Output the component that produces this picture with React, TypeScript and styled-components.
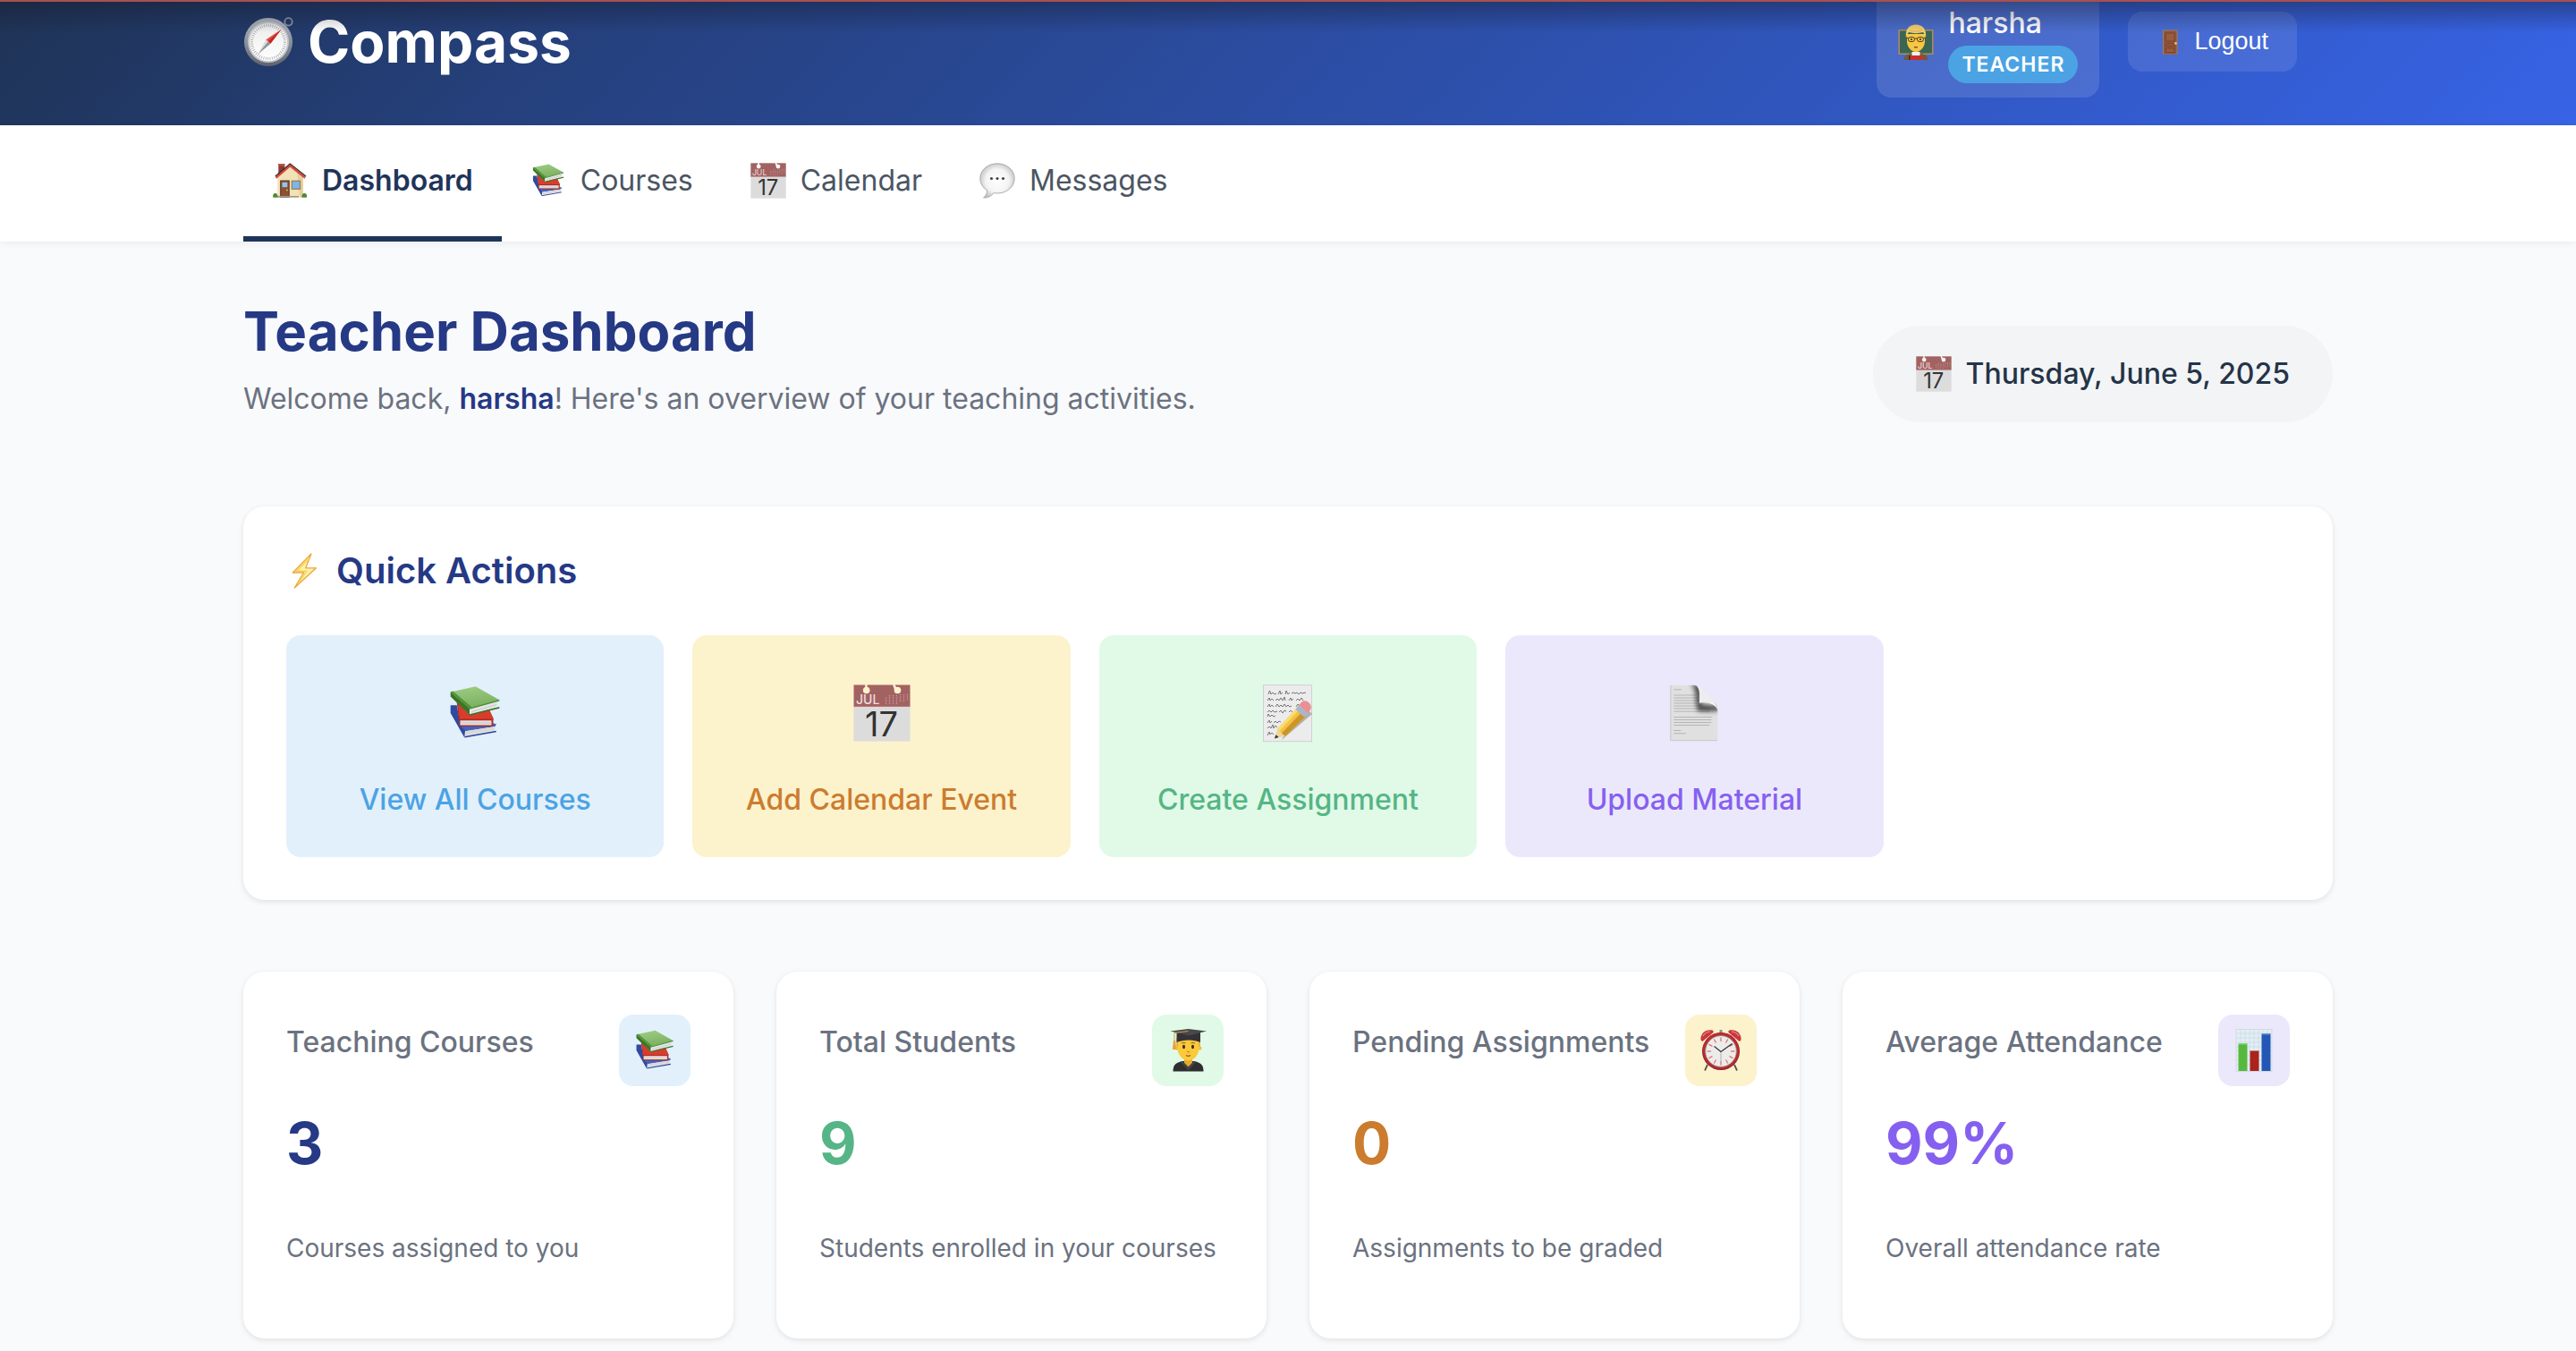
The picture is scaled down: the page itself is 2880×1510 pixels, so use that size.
import React from "react";
import styled, { createGlobalStyle } from "styled-components";

const GlobalStyle = createGlobalStyle`
  *, *::before, *::after { box-sizing: border-box; }
  body {
    margin: 0;
    background: #f9fafc;
    color: #243447;
    font-family: Inter, "Noto Sans", sans-serif;
    font-size: 32px;
  }
  h1, h2, h3, p { margin: 0; }
`;

/* ---------- palette ---------- */

type Tone = "blue" | "amber" | "green" | "violet";

const tones: Record<Tone, { surface: string; ink: string }> = {
  blue: { surface: "#e2f0fc", ink: "#4ba3e3" },
  amber: { surface: "#fcf2cc", ink: "#cb7c2f" },
  green: { surface: "#e1fae7", ink: "#55b586" },
  violet: { surface: "#ece8fc", ink: "#8560f0" },
};

/* ---------- icons ---------- */

const Glyph = styled.svg<{ $size: number }>`
  width: ${(p) => p.$size}px;
  height: ${(p) => p.$size}px;
  flex: none;
  display: block;
  overflow: visible;
`;

type IconProps = { size: number };

const CompassIcon = ({ size }: IconProps) => (
  <Glyph $size={size} viewBox="0 0 56 56" aria-hidden="true">
    <defs>
      <linearGradient id="compassRim" x1="0" y1="0" x2="0" y2="1">
        <stop offset="0" stopColor="#b4bac2" />
        <stop offset="0.5" stopColor="#8b929c" />
        <stop offset="1" stopColor="#5d636c" />
      </linearGradient>
      <linearGradient id="compassFace" x1="0" y1="0" x2="0" y2="1">
        <stop offset="0" stopColor="#ececec" />
        <stop offset="1" stopColor="#ffffff" />
      </linearGradient>
    </defs>
    <circle cx="50.5" cy="5.4" r="4.2" fill="none" stroke="#8f97a3" strokeWidth="1.8" />
    <circle cx="28" cy="28" r="27" fill="url(#compassRim)" />
    <circle cx="28" cy="28" r="23" fill="#c4c8cd" />
    <circle cx="28" cy="28" r="21" fill="url(#compassFace)" />
    <circle cx="28" cy="28" r="18.5" fill="none" stroke="#a4a4a4" strokeWidth="3" strokeDasharray="0.8 1.6" />
    <path d="M42.6 13.8 30.4 29.8 25.2 25.4Z" fill="#e8463c" />
    <path d="M42.6 13.8 30.4 29.8 27.8 27.6Z" fill="#c3261f" />
    <path d="M16.4 41.6 25.2 25.4 30.4 29.8Z" fill="#d9dadc" />
    <path d="M16.4 41.6 27.8 27.6 30.4 29.8Z" fill="#8d9096" />
  </Glyph>
);

const TeacherIcon = ({ size }: IconProps) => (
  <Glyph $size={size} viewBox="0 0 40 40" aria-hidden="true">
    <rect x="0.5" y="6" width="39" height="28" fill="#b08a62" />
    <rect x="2" y="7.5" width="36" height="25" fill="#3a6652" />
    <path d="M6 40c.6-4 3-6 8-7h12c5 1 7.4 3 8 7z" fill="#6f5c3f" />
    <path d="M15.5 31h9v5h-9z" fill="#f1f1f1" />
    <rect x="12" y="35" width="16" height="5" fill="#c6322b" />
    <path d="M12 35h1.5v5H12z" fill="#3a2a24" />
    <path d="M10 11h20v8c0 6-4.500 12-10 12S10 25 10 19z" fill="#f6c743" />
    <path d="M9 16C7.500 5 13 .5 20 .5S32.500 5 31 16c-.8-3.500-1.500-5.500-3-7-5 1.500-11 1.500-16 0-1.500 1.500-2.300 3.500-3 7z" fill="#f1cd6c" />
    <path d="M13 7c5 2 10 1.500 14-.5" fill="none" stroke="#d9a94a" strokeWidth="0.800" />
    <rect x="11.500" y="14.500" width="7" height="5" rx="2.400" fill="none" stroke="#4a3826" strokeWidth="1" />
    <rect x="21.500" y="14.500" width="7" height="5" rx="2.400" fill="none" stroke="#4a3826" strokeWidth="1" />
    <path d="M18.500 16h3M9.500 15.500h2M28.500 15.500h2" stroke="#4a3826" strokeWidth="1" />
    <circle cx="15" cy="17" r="1.100" fill="#3a2c1e" />
    <circle cx="25" cy="17" r="1.100" fill="#3a2c1e" />
    <path d="M18 25.500c1.300.6 2.700.6 4 0" fill="none" stroke="#7b3a1c" strokeWidth="1.300" />
  </Glyph>
);

const DoorIcon = ({ size }: IconProps) => (
  <Glyph $size={size} viewBox="0 0 30 30" aria-hidden="true">
    <rect x="7" y="1.5" width="16.5" height="27.5" fill="#a97a5c" />
    <rect x="8" y="2.5" width="14.5" height="26" fill="#90543a" />
    <path d="M10.500 5h9.500v9h-9.500zM10.500 17h9.500v2.500h-9.500zM10.500 22h9.500v4.500h-9.500z" fill="#985c40" stroke="#74402a" strokeWidth="0.800" />
    <circle cx="21.500" cy="16.500" r="1.400" fill="#e8c455" />
  </Glyph>
);

const HouseIcon = ({ size }: IconProps) => (
  <Glyph $size={size} viewBox="0 0 40 40" aria-hidden="true">
    <rect x="7.300" y="1" width="7" height="13" fill="#8f3a33" />
    <rect x="7.300" y="1" width="7" height="2.500" fill="#b4554c" />
    <path d="M20.300 4 6.300 16v22.500h28.500V16z" fill="#f3e2b8" />
    <path d="M28 10.500 34.800 16v22.500H31z" fill="#e5cf9d" />
    <path d="M20.300 1.500 3.800 15.800l1.300 2 15.200-13L36.500 17.800l1.300-2z" fill="#d8483c" />
    <path d="M3.800 15 20.300 1 38 15" fill="none" stroke="#3a2b2b" strokeWidth="1.300" />
    <rect x="9.700" y="20" width="9.500" height="18.500" fill="#8a5134" stroke="#5b3220" strokeWidth="1" />
    <rect x="11.500" y="21.800" width="5.800" height="5.400" fill="#8fc6ee" />
    <circle cx="17" cy="30.500" r="0.900" fill="#e9bd45" />
    <rect x="22.300" y="20.300" width="9.200" height="9" fill="#7fb6e8" stroke="#9a7f55" strokeWidth="1.300" />
    <path d="M6 37h24v1.700H6z" fill="#a39a88" />
    <path d="M1.200 38.700c-.5-3 1-5 2.600-4.700 2-.3 3 2 2.800 4.700zM33.500 38.700c-.4-3 1.200-5 3-4.700 2 0 2.900 2 2.600 4.700z" fill="#4f8a33" />
  </Glyph>
);

const BooksIcon = ({ size }: IconProps) => (
  <Glyph $size={size} viewBox="0 0 64 64" aria-hidden="true">
    <defs>
      <linearGradient id="bookGreen" x1="0" y1="0" x2="0.300" y2="1">
        <stop offset="0" stopColor="#a0cd84" />
        <stop offset="1" stopColor="#7bb160" />
      </linearGradient>
    </defs>
    <path d="M4.700 23.300h7L16 46l39.700-2-1.200 3-33.500 5-.7 7.500L4.700 32z" fill="#2f4a9f" />
    <path d="M16 46.500 52 43l3.700 1.500-1.400 2-33 5.500z" fill="#4262c2" />
    <path d="M21.300 52.300 54 47v4.200L21.300 57.300z" fill="#d9d9d9" />
    <path d="M20.500 58.700 55.700 52.500" fill="none" stroke="#2b3f94" strokeWidth="1.500" />
    <path d="M11.700 20 26 34l22-6 4.700 10.300L52 47H15z" fill="#b12a20" />
    <path d="M13 22 26 34l22-5 4.700 9.500H15z" fill="#d93c2d" />
    <path d="M15.500 40.300h35V45.500h-35z" fill="#e2e2e2" />
    <path d="M15.500 43H50" stroke="#bdbdbd" strokeWidth="0.800" />
    <path d="M4.700 8.300 26 26.300v8L4.700 13.500z" fill="#3c7526" />
    <path d="M4.700 8.300 32.700 2.300 59.300 17.300 26 26.800z" fill="url(#bookGreen)" />
    <path d="M4.700 8.300 26 26.300l2.500-.7L7.500 7.700z" fill="#4f8f35" />
    <path d="M28 28 57 19.500l-1.500 5.800L27.500 32.500z" fill="#e4e4e4" />
    <path d="M28 30.500 56.500 22.500" stroke="#c0c0c0" strokeWidth="0.800" />
    <path d="M26 34 59.300 25.800" fill="none" stroke="#3c7526" strokeWidth="1.700" />
    <path d="M26 27 59.300 17.800" fill="none" stroke="#4f8f35" strokeWidth="1.500" />
  </Glyph>
);

const CalendarIcon = ({ size }: IconProps) => {
  const id = React.useId();
  return (
    <Glyph $size={size} viewBox="0 0 64 64" aria-hidden="true">
      <mask id={id}>
        <rect width="64" height="64" fill="#fff" />
        <circle cx="14.700" cy="6.500" r="3.800" fill="#000" />
        <path d="M13.200 0h2.400v5h-2.400zM44 0h2.500l3 6h-3.500z" fill="#000" />
        <circle cx="49.500" cy="6.500" r="3.800" fill="#000" />
      </mask>
      <g mask={`url(#${id})`}>
        <rect x="0.500" y="0.500" width="63" height="25" fill="#a36262" />
        <rect x="0.500" y="25.500" width="63" height="38" fill="#dcdcdc" />
        <path d="M.5 25.300h63" stroke="#eee0e0" strokeWidth="0.800" />
      </g>
      <text x="3" y="22" fontFamily="Inter, sans-serif" fontSize="14" fill="#eddcdc">JUL</text>
      <path
        d="M36.500 14.500v7.500M40.500 12v10M44.500 12v10M48.500 12v10M52.500 11v9M56.500 11v9M60.500 11v7"
        stroke="#c89a9a"
        strokeWidth="1.300"
        strokeDasharray="1.200 1"
      />
      <text x="31.500" y="57.500" textAnchor="middle" fontFamily="Inter, sans-serif" fontSize="38" fontWeight="400" fill="#333">17</text>
    </Glyph>
  );
};

const SpeechIcon = ({ size }: IconProps) => (
  <Glyph $size={size} viewBox="0 0 40 40" aria-hidden="true">
    <defs>
      <radialGradient id="bubble" cx="0.500" cy="0.500" r="0.560">
        <stop offset="0" stopColor="#ffffff" />
        <stop offset="0.600" stopColor="#f4f4f4" />
        <stop offset="1" stopColor="#bdbdbd" />
      </radialGradient>
    </defs>
    <path
      d="M20 .8C9.400.8.800 8 .8 17.500c0 5.500 3 10.300 7.700 13.300.3 3-1.200 6-4 8.200 5 .3 9-2 11.500-5.300 1.300.2 2.600.3 4 .3 10.600 0 19.200-7 19.200-16.500S30.600.8 20 .8z"
      fill="url(#bubble)"
      stroke="#a6a6a6"
      strokeWidth="0.900"
    />
    <circle cx="13.500" cy="17.500" r="1.600" fill="#444" />
    <circle cx="20" cy="17.500" r="1.600" fill="#444" />
    <circle cx="26.500" cy="17.500" r="1.600" fill="#444" />
  </Glyph>
);

const BoltIcon = ({ size }: IconProps) => (
  <Glyph $size={size} viewBox="0 0 40 40" aria-hidden="true">
    <path d="M28 1 7.300 22h12.200L9.300 39 33.500 16.800H21.800z" fill="#fdf0a8" stroke="#eda63a" strokeWidth="1.300" strokeLinejoin="round" />
    <path d="M25.500 6.500 11.500 20.400h11L14 33.500" fill="none" stroke="#f7cf4d" strokeWidth="1.300" />
  </Glyph>
);

const MemoIcon = ({ size }: IconProps) => (
  <Glyph $size={size} viewBox="0 0 64 64" aria-hidden="true">
    <rect x="4.500" y="0.700" width="54" height="63" fill="#ececec" stroke="#cdcdcd" strokeWidth="0.900" />
    <g fill="none" stroke="#666" strokeWidth="0.900">
      <path d="M10 11l1.500-4 1.500 4 2-2 2 2 2-1M21 11l2-4 1 4 2-2M29 11l1-4 2 4 2-2M36 10l2-1 2 1 2-1 2 2 2-2 2 1 4-1" />
      <path d="M9 18l2-3 1 3 2-2 2 2M18 18l2-2 2 2 2-3 2 3 2-4 1 4M33 18l2-3 1 3 2-2M41 18l2-2 2 2 2-3 2 3" />
      <path d="M9 25l2-3 1 3 2-2 2 2M18 25l2-3 2 3 2-2 2 2 2-3 2 3 2-2 2 2 2-1M41 25l2-3 2 2" />
      <path d="M9 31l2-2 2 2 2-2 2 2 3-1M22 31l2-2 2 3 2-3 2 1M33 31l2-2 2 2" />
      <path d="M9 36l1-3 2 3 2-2 2 2 2-1" />
      <path d="M9 43l2-3 1 3 2-2M16 43l2-2 2 2 2-2 2 1" />
      <path d="M9 49l2-2 2 2 2-4 1 4 2-3 2 2" />
      <path d="M9 57l2-4 1 3 2-2 2 2" />
    </g>
    <path d="M25 62 59 33l-3-3-28 26z" fill="#8a8a8a" opacity="0.600" />
    <path d="M17 60.500 20.500 49 29 57.500z" fill="#efd59a" />
    <path d="M17 60.500 18.300 56.300l3.400 2.800z" fill="#333" />
    <path d="M20 50 42 26l10 9.500L29 57.800z" fill="#f3c242" />
    <path d="M25 54.500 47.500 31l4.500 4.500L29 57.800z" fill="#cc9527" />
    <path d="M20 50 42 26l2.500 2.300L22.500 52z" fill="#fbdc6f" />
    <path d="M40.500 28l3.500-5 10.500 9.500-4.500 4z" fill="#a8b8cc" />
    <path d="M44 23 47.500 19.500c2-2 5.500-1.500 8 1s3.200 5.800 1.500 7.800L54 32.500z" fill="#ea9095" />
  </Glyph>
);

const PageIcon = ({ size }: IconProps) => (
  <Glyph $size={size} viewBox="0 0 64 64" aria-hidden="true">
    <defs>
      <clipPath id="pageShape">
        <path d="M5.300.7H30c5 0 8 2 9 4.500L56 21c1.500 2 2.300 5 2.300 9v33.300h-53z" />
      </clipPath>
      <filter id="pageShade" x="-50%" y="-50%" width="200%" height="200%">
        <feGaussianBlur stdDeviation="2.500" />
      </filter>
      <linearGradient id="curl" x1="0" y1="1" x2="1" y2="0">
        <stop offset="0" stopColor="#cfcfcf" />
        <stop offset="0.500" stopColor="#f4f4f4" />
        <stop offset="1" stopColor="#ffffff" />
      </linearGradient>
    </defs>
    <g clipPath="url(#pageShape)">
      <rect x="5" y="0.500" width="54" height="63" fill="#e0e0e0" />
      <path d="M5.700 1v62M5.300 62.800h53" stroke="#c6c6c6" strokeWidth="1.200" />
      <path
        d="M9.300 5.800h8.500M9.300 12h25M9.300 15h27M9.300 18h27M9.300 21h26M9.300 24h30M9.300 27h40M9.300 30.200h40M9.300 36.500h43M9.300 39.500h42M9.300 42.500h42M9.300 45.500h40M9.300 51.500h8M9.300 54.800h13.500"
        stroke="#b4b4b4"
        strokeWidth="1"
      />
      <path d="M28-2 40 2v20l22 2v4c-6 3-16 2-26 2l-2-10C34 8 32 3 28-2z" fill="#333" opacity="0.850" filter="url(#pageShade)" />
    </g>
    <path d="M34.500 1c4 3.500 4.300 12 3.300 19.700C47 19.500 54 21 58.300 28c-.4-3-1.200-4.500-2.500-6L39.500 4.500C38 2.500 36.500 1.500 34.500 1z" fill="url(#curl)" />
    <path d="M38.300 4 57 21.800c-5-2.300-12-2.300-18.700-1.300z" fill="#ededed" />
  </Glyph>
);

const StudentIcon = ({ size }: IconProps) => (
  <Glyph $size={size} viewBox="0 0 48 48" aria-hidden="true">
    <path d="M7.500 47.500C7.500 41 9.500 38 18 36h13c8.500 2 10.500 5 10.500 11.500z" fill="#2e2e31" />
    <path d="M20 33h9v5l-4.500 4.500L20 38z" fill="#e5a92c" />
    <path d="M18 36l6.500 7 6.500-7 2 1-8.500 9.500L16 37z" fill="#444448" />
    <path d="M11.500 10h26v11h-26z" fill="#c58a35" />
    <circle cx="11.800" cy="21.500" r="2.200" fill="#f5bb38" />
    <circle cx="37.200" cy="21.500" r="2.200" fill="#f5bb38" />
    <path d="M12.500 12h24v9c0 8-5.500 14.500-12 14.500S12.500 29 12.500 21z" fill="#fbca3b" />
    <ellipse cx="19.500" cy="20" rx="1.500" ry="2.200" fill="#3d2a1b" />
    <ellipse cx="29.500" cy="20" rx="1.500" ry="2.200" fill="#3d2a1b" />
    <path d="M17 16.200c1.500-1 3-1 4.500-.3M27.500 15.900c1.500-.7 3-.7 4.500.3" fill="none" stroke="#a8742a" strokeWidth="1.100" />
    <path d="M23 25.300c1 .7 2 .7 3 0" fill="none" stroke="#c9861f" strokeWidth="1.100" />
    <path d="M22 29.500c1.500 1 3.500 1 5 0" fill="none" stroke="#a3512a" strokeWidth="1.300" />
    <path d="M11.500 4h26.500v11c-7-3.500-19-3.500-26.500 0z" fill="#333337" />
    <path d="M4.500 2.500 24.500 0l20.500 2.500L25 7.500z" fill="#48484d" />
    <path d="M24.500 2.500 9 4.500V15" fill="none" stroke="#d69a3c" strokeWidth="1" />
    <path d="M8 13h2.200l1 10H6.800z" fill="#e8a33b" />
  </Glyph>
);

const ticks = Array.from({ length: 12 }, (_, i) => i * 30);

const ClockIcon = ({ size }: IconProps) => (
  <Glyph $size={size} viewBox="0 0 48 48" aria-hidden="true">
    <path d="M9 40 6 46.500M39 40l3 6.500" stroke="#555" strokeWidth="1.800" />
    <path d="M24 1v5" stroke="#8d8d8d" strokeWidth="3" />
    <path d="M1.500 12C1 5 7 0 14.500 1.500c1 .5 1.500 1.500 1 2.500L4 13.500c-1 .5-2.300 0-2.500-1.500z" fill="#c8373d" />
    <path d="M46.500 12C47 5 41 0 33.500 1.500c-1 .5-1.500 1.500-1 2.500L44 13.500c1 .5 2.300 0 2.500-1.500z" fill="#c8373d" />
    <path d="M4 8c1.500-3 4-4.500 8-5M44 8c-1.500-3-4-4.500-8-5" fill="none" stroke="#e78a8a" strokeWidth="1.200" />
    <circle cx="24" cy="25" r="21" fill="#8e1f24" />
    <circle cx="24" cy="24.500" r="20.300" fill="#b92c32" />
    <circle cx="24" cy="25" r="17.300" fill="#ececea" stroke="#9b9b9b" strokeWidth="0.800" />
    {ticks.map((angle) => (
      <path key={angle} d="M24 9.500v4.500" stroke="#d9605c" strokeWidth="1.100" transform={`rotate(${angle} 24 25)`} />
    ))}
    <path d="M24 25v12" stroke="#b3b3b3" strokeWidth="1" />
    <path d="M16.500 19.500 24 25.500 36.500 16.500" fill="none" stroke="#333" strokeWidth="1.200" />
  </Glyph>
);

const ChartIcon = ({ size }: IconProps) => (
  <Glyph $size={size} viewBox="0 0 48 48" aria-hidden="true">
    <rect x="4" y="0.500" width="40" height="47" fill="#e3eef3" stroke="#ccd6dc" strokeWidth="0.800" />
    <path
      d="M4 5h40M4 10h40M4 15h40M4 20h40M4 25h40M4 30h40M4 35h40M4 40h40M9 1v46M14 1v46M19 1v46M24 1v46M29 1v46M34 1v46M39 1v46"
      stroke="#c8dbe6"
      strokeWidth="0.800"
    />
    <rect x="6.500" y="16" width="10" height="31" fill="#56b93f" />
    <rect x="19.500" y="24.500" width="10" height="22.500" fill="#ab231b" />
    <rect x="32.500" y="5" width="10" height="42" fill="#2457b5" />
    <path d="M6.500 16h10v1.500h-10zM32.500 5h10v1.500h-10z" fill="#fff" opacity="0.350" />
  </Glyph>
);

/* ---------- header ---------- */

const Container = styled.div`
  width: 100%;
  max-width: 2400px;
  margin: 0 auto;
  padding: 0 32px;
`;

const Header = styled.header`
  position: relative;
  overflow: hidden;
  padding-bottom: 47px;
  background: linear-gradient(135deg, #1f3355 0%, #25407c 22%, #3763e5 100%);
  color: #fff;

  &::after {
    content: "";
    position: absolute;
    inset: 0 0 auto;
    height: 36px;
    border-top: 2px solid #a9504f;
    background: linear-gradient(rgba(20, 24, 40, 0.4), rgba(20, 24, 40, 0));
    pointer-events: none;
  }
`;

const HeaderRow = styled.div`
  display: flex;
  align-items: center;
  justify-content: space-between;
  height: 93px;
  padding-right: 40px;
`;

const Brand = styled.a`
  display: flex;
  align-items: center;
  gap: 16px;
  color: inherit;
  text-decoration: none;
  font-size: 64px;
  font-weight: 700;
  line-height: 76px;
`;

const HeaderTools = styled.div`
  display: flex;
  align-items: center;
  gap: 32px;
`;

const UserCard = styled.div`
  display: flex;
  align-items: center;
  gap: 16px;
  padding: 16px 24px;
  border-radius: 16px;
  background: rgba(255, 255, 255, 0.12);
`;

const UserText = styled.div`
  display: flex;
  flex-direction: column;
  align-items: flex-start;
`;

const UserName = styled.span`
  font-weight: 500;
  line-height: 50px;
`;

const RoleBadge = styled.span`
  padding: 0 15px;
  border-radius: 24px;
  background: #4ba3e3;
  font-size: 23px;
  font-weight: 600;
  line-height: 42px;
  letter-spacing: 1px;
`;

const LogoutButton = styled.button`
  display: flex;
  align-items: center;
  gap: 12px;
  height: 67px;
  padding: 0 32px;
  border: 0;
  border-radius: 16px;
  background: rgba(255, 255, 255, 0.1);
  color: #fff;
  font-family: "Liberation Sans", Arial, sans-serif;
  font-size: 27px;
  cursor: pointer;
`;

/* ---------- navigation ---------- */

const NavBar = styled.nav`
  position: relative;
  background: #fff;
  box-shadow: 0 2px 8px rgba(0, 0, 0, 0.06);
`;

const NavRow = styled.div`
  display: flex;
`;

const NavLink = styled.a<{ $active?: boolean }>`
  display: flex;
  align-items: center;
  gap: 16px;
  padding: 32px 32px;
  border-bottom: 6px solid ${(p) => (p.$active ? "#1f3459" : "transparent")};
  color: ${(p) => (p.$active ? "#1f3459" : "#4b5563")};
  font-weight: ${(p) => (p.$active ? 600 : 400)};
  line-height: 60px;
  text-decoration: none;
`;

/* ---------- page ---------- */

const Main = styled.main`
  padding: 64px 0 12px;
`;

const PageHead = styled.div`
  display: flex;
  align-items: center;
  justify-content: space-between;
  margin-bottom: 64px;
`;

const HeadText = styled.div`
  padding-bottom: 30px;
`;

const PageTitle = styled.h1`
  margin-bottom: 14px;
  color: #253985;
  font-size: 60px;
  font-weight: 700;
  line-height: 72px;
`;

const Welcome = styled.p`
  color: #6b7280;
  line-height: 52px;

  strong {
    color: #253985;
    font-weight: 600;
  }
`;

const DatePill = styled.div`
  display: flex;
  align-items: center;
  gap: 16px;
  padding: 28px 48px;
  border-radius: 54px;
  background: #f3f4f6;
  font-weight: 500;
  line-height: 52px;
`;

const Panel = styled.section`
  padding: 48px;
  border-radius: 24px;
  background: #fff;
  box-shadow: 0 2px 6px rgba(0, 0, 0, 0.1);
`;

const PanelTitle = styled.h2`
  display: flex;
  align-items: center;
  gap: 16px;
  margin-bottom: 48px;
  color: #253985;
  font-size: 40px;
  font-weight: 600;
  line-height: 48px;
`;

const ActionGrid = styled.div`
  display: grid;
  grid-template-columns: repeat(5, 1fr);
  gap: 32px;
`;

const ActionTile = styled.a<{ $tone: Tone }>`
  display: flex;
  flex-direction: column;
  align-items: center;
  gap: 39px;
  padding: 55px 16px 38px;
  border-radius: 16px;
  background: ${(p) => tones[p.$tone].surface};
  color: ${(p) => tones[p.$tone].ink};
  font-weight: 500;
  line-height: 52px;
  text-align: center;
  text-decoration: none;
`;

const StatGrid = styled.div`
  display: grid;
  grid-template-columns: repeat(4, 1fr);
  gap: 48px;
  margin-top: 80px;
`;

const StatHead = styled.div`
  display: flex;
  align-items: flex-start;
  justify-content: space-between;
  margin-bottom: 32px;
`;

const StatLabel = styled.h3`
  color: #6b7280;
  font-size: 32px;
  font-weight: 500;
  line-height: 62px;
`;

const StatIcon = styled.div<{ $tone: Tone }>`
  display: grid;
  place-items: center;
  width: 80px;
  height: 80px;
  border-radius: 16px;
  background: ${(p) => tones[p.$tone].surface};
`;

const StatValue = styled.p<{ $color: string }>`
  margin-bottom: 61px;
  color: ${(p) => p.$color};
  font-size: 64px;
  font-weight: 700;
  line-height: 64px;
`;

const StatNote = styled.p`
  padding-bottom: 29px;
  color: #6b7280;
  font-size: 28px;
  line-height: 48px;
`;

/* ---------- data ---------- */

type Icon = (props: IconProps) => React.JSX.Element;

const navItems: { label: string; icon: Icon; active?: boolean }[] = [
  { label: "Dashboard", icon: HouseIcon, active: true },
  { label: "Courses", icon: BooksIcon },
  { label: "Calendar", icon: CalendarIcon },
  { label: "Messages", icon: SpeechIcon },
];

const actions: { label: string; icon: Icon; tone: Tone }[] = [
  { label: "View All Courses", icon: BooksIcon, tone: "blue" },
  { label: "Add Calendar Event", icon: CalendarIcon, tone: "amber" },
  { label: "Create Assignment", icon: MemoIcon, tone: "green" },
  { label: "Upload Material", icon: PageIcon, tone: "violet" },
];

const stats: { label: string; value: string; note: string; icon: Icon; tone: Tone; color: string }[] = [
  { label: "Teaching Courses", value: "3", note: "Courses assigned to you", icon: BooksIcon, tone: "blue", color: "#253985" },
  { label: "Total Students", value: "9", note: "Students enrolled in your courses", icon: StudentIcon, tone: "green", color: tones.green.ink },
  { label: "Pending Assignments", value: "0", note: "Assignments to be graded", icon: ClockIcon, tone: "amber", color: tones.amber.ink },
  { label: "Average Attendance", value: "99%", note: "Overall attendance rate", icon: ChartIcon, tone: "violet", color: tones.violet.ink },
];

export default function App() {
  return (
    <>
      <GlobalStyle />
      <Header>
        <Container>
          <HeaderRow>
            <Brand href="#">
              <CompassIcon size={56} />
              Compass
            </Brand>
            <HeaderTools>
              <UserCard>
                <TeacherIcon size={40} />
                <UserText>
                  <UserName>harsha</UserName>
                  <RoleBadge>TEACHER</RoleBadge>
                </UserText>
              </UserCard>
              <LogoutButton type="button">
                <DoorIcon size={30} />
                Logout
              </LogoutButton>
            </HeaderTools>
          </HeaderRow>
        </Container>
      </Header>

      <NavBar>
        <Container>
          <NavRow>
            {navItems.map(({ label, icon: ItemIcon, active }) => (
              <NavLink key={label} href="#" $active={active} aria-current={active ? "page" : undefined}>
                <ItemIcon size={40} />
                {label}
              </NavLink>
            ))}
          </NavRow>
        </Container>
      </NavBar>

      <Main>
        <Container>
          <PageHead>
            <HeadText>
              <PageTitle>Teacher Dashboard</PageTitle>
              <Welcome>
                Welcome back, <strong>harsha</strong>! Here's an overview of your teaching activities.
              </Welcome>
            </HeadText>
            <DatePill>
              <CalendarIcon size={40} />
              Thursday, June 5, 2025
            </DatePill>
          </PageHead>

          <Panel>
            <PanelTitle>
              <BoltIcon size={40} />
              Quick Actions
            </PanelTitle>
            <ActionGrid>
              {actions.map(({ label, icon: ItemIcon, tone }) => (
                <ActionTile key={label} href="#" $tone={tone}>
                  <ItemIcon size={64} />
                  {label}
                </ActionTile>
              ))}
            </ActionGrid>
          </Panel>

          <StatGrid>
            {stats.map(({ label, value, note, icon: ItemIcon, tone, color }) => (
              <Panel key={label}>
                <StatHead>
                  <StatLabel>{label}</StatLabel>
                  <StatIcon $tone={tone}>
                    <ItemIcon size={48} />
                  </StatIcon>
                </StatHead>
                <StatValue $color={color}>{value}</StatValue>
                <StatNote>{note}</StatNote>
              </Panel>
            ))}
          </StatGrid>
        </Container>
      </Main>
    </>
  );
}
